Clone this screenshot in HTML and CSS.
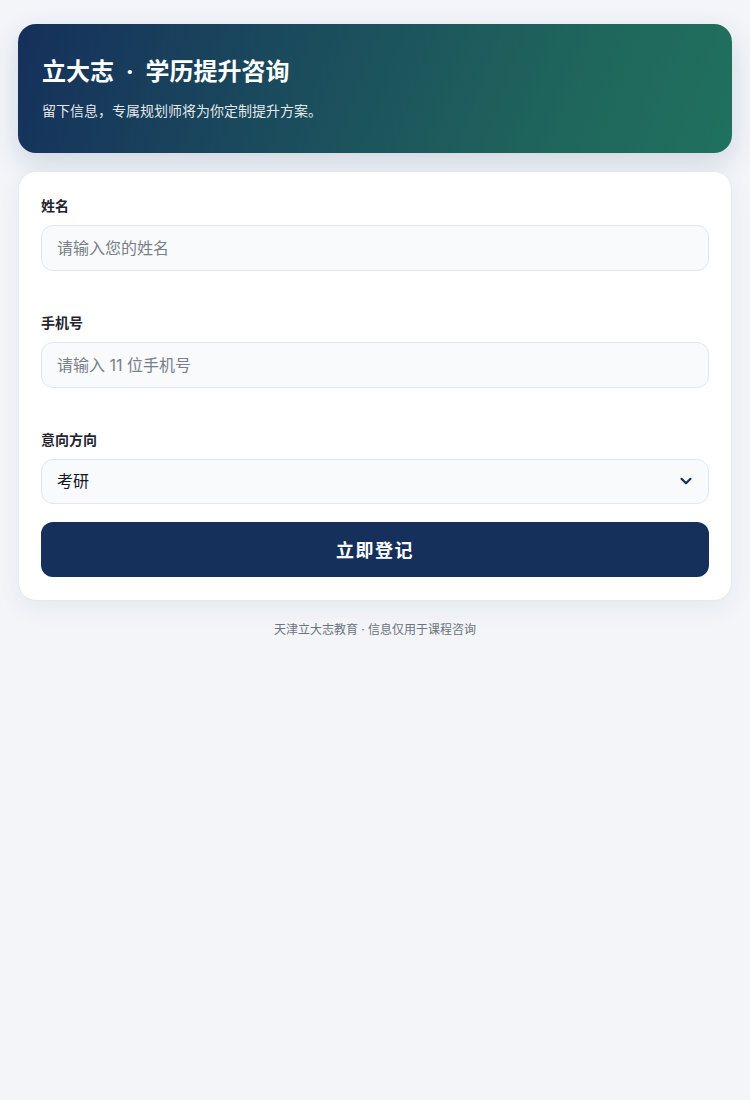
FILE: index.html
```html
<!DOCTYPE html>
<html lang="zh-CN">
<head>
<meta charset="utf-8">
<title>立大志 · 学历提升咨询</title>
<link rel="stylesheet" href="styles.css">
</head>
<body>
<main class="page">
  <header class="hero">
    <h1 class="hero-title">立大志 <span class="sep">·</span> 学历提升咨询</h1>
    <p class="hero-sub">留下信息，专属规划师将为你定制提升方案。</p>
  </header>

  <form class="form-card">
    <div class="field">
      <label class="field-label" for="name">姓名</label>
      <input class="field-input" id="name" type="text" placeholder="请输入您的姓名">
      <div class="field-hint"></div>
    </div>
    <div class="field">
      <label class="field-label" for="phone">手机号</label>
      <input class="field-input" id="phone" type="tel" placeholder="请输入 11 位手机号">
      <div class="field-hint"></div>
    </div>
    <div class="field field-last">
      <label class="field-label" for="goal">意向方向</label>
      <div class="select-wrap">
        <select class="field-input field-select" id="goal">
          <option>考研</option>
          <option>专升本</option>
          <option>成人高考</option>
        </select>
        <svg class="select-arrow" width="14" height="14" viewBox="0 0 14 14" aria-hidden="true">
          <path d="M2.5 4.8 L7 9.2 L11.5 4.8" fill="none" stroke="#15305a" stroke-width="2.2" stroke-linecap="round" stroke-linejoin="round"/>
        </svg>
      </div>
    </div>
    <button class="submit" type="button">立即登记</button>
  </form>

  <p class="foot">天津立大志教育 · 信息仅用于课程咨询</p>
</main>
</body>
</html>
```

FILE: styles.css
```css
* {
  box-sizing: border-box;
}

html, body {
  margin: 0;
  padding: 0;
}

body {
  background: #f3f5f9;
  font-family: "Inter", "Noto Sans CJK SC", "Noto Sans", sans-serif;
  color: #111827;
}

.page {
  padding: 24px 18px;
  display: flex;
  flex-direction: column;
  gap: 18px;
}

.hero {
  border-radius: 18px;
  padding: 32px 24px 31px;
  background: linear-gradient(110deg, #15305b 0%, #1b4d5d 40%, #1f655c 75%, #20715e 100%);
  box-shadow: 0 10px 28px rgba(21, 48, 91, 0.16);
  color: #ffffff;
}

.hero-title {
  margin: 0;
  font-size: 24px;
  line-height: 1.3;
  font-weight: 700;
}

/* separator dot between brand and topic */
.hero-title .sep {
  margin: 0 6px;
}

.hero-sub {
  margin: 13px 0 0;
  font-size: 14px;
  line-height: 22px;
  color: rgba(255, 255, 255, 0.9);
}

.form-card {
  background: #ffffff;
  border: 1px solid #e5e9f0;
  border-radius: 18px;
  padding: 23px 22px 23px;
  box-shadow: 0 8px 24px rgba(21, 48, 91, 0.06);
  display: flex;
  flex-direction: column;
}

.field {
  display: flex;
  flex-direction: column;
}

.field-label {
  font-size: 14px;
  line-height: 21px;
  font-weight: 700;
  color: #1f2430;
  margin-bottom: 9px;
}

.field-input {
  width: 100%;
  height: 45.5px;
  border: 1px solid #e1e7ef;
  border-radius: 12px;
  background: #f8fafc;
  padding: 0 15px;
  font-family: inherit;
  font-size: 16px;
  color: #111827;
  outline: none;
}

.field-input::placeholder {
  color: #7a7f88;
}

.field-hint {
  min-height: 41.5px;
}

.field-last {
  margin-bottom: 18px;
}

.select-wrap {
  position: relative;
}

.field-select {
  height: 44.5px;
  appearance: none;
  -webkit-appearance: none;
  color: #111827;
}

.select-arrow {
  position: absolute;
  right: 16px;
  top: 15px;
  pointer-events: none;
}

.submit {
  height: 55px;
  border: 0;
  border-radius: 12px;
  background: #15305b;
  color: #ffffff;
  font-family: inherit;
  font-size: 18px;
  font-weight: 700;
  letter-spacing: 1.5px;
}

.foot {
  margin: 0;
  text-align: center;
  font-size: 12px;
  line-height: 22px;
  color: #6b7280;
}
```
